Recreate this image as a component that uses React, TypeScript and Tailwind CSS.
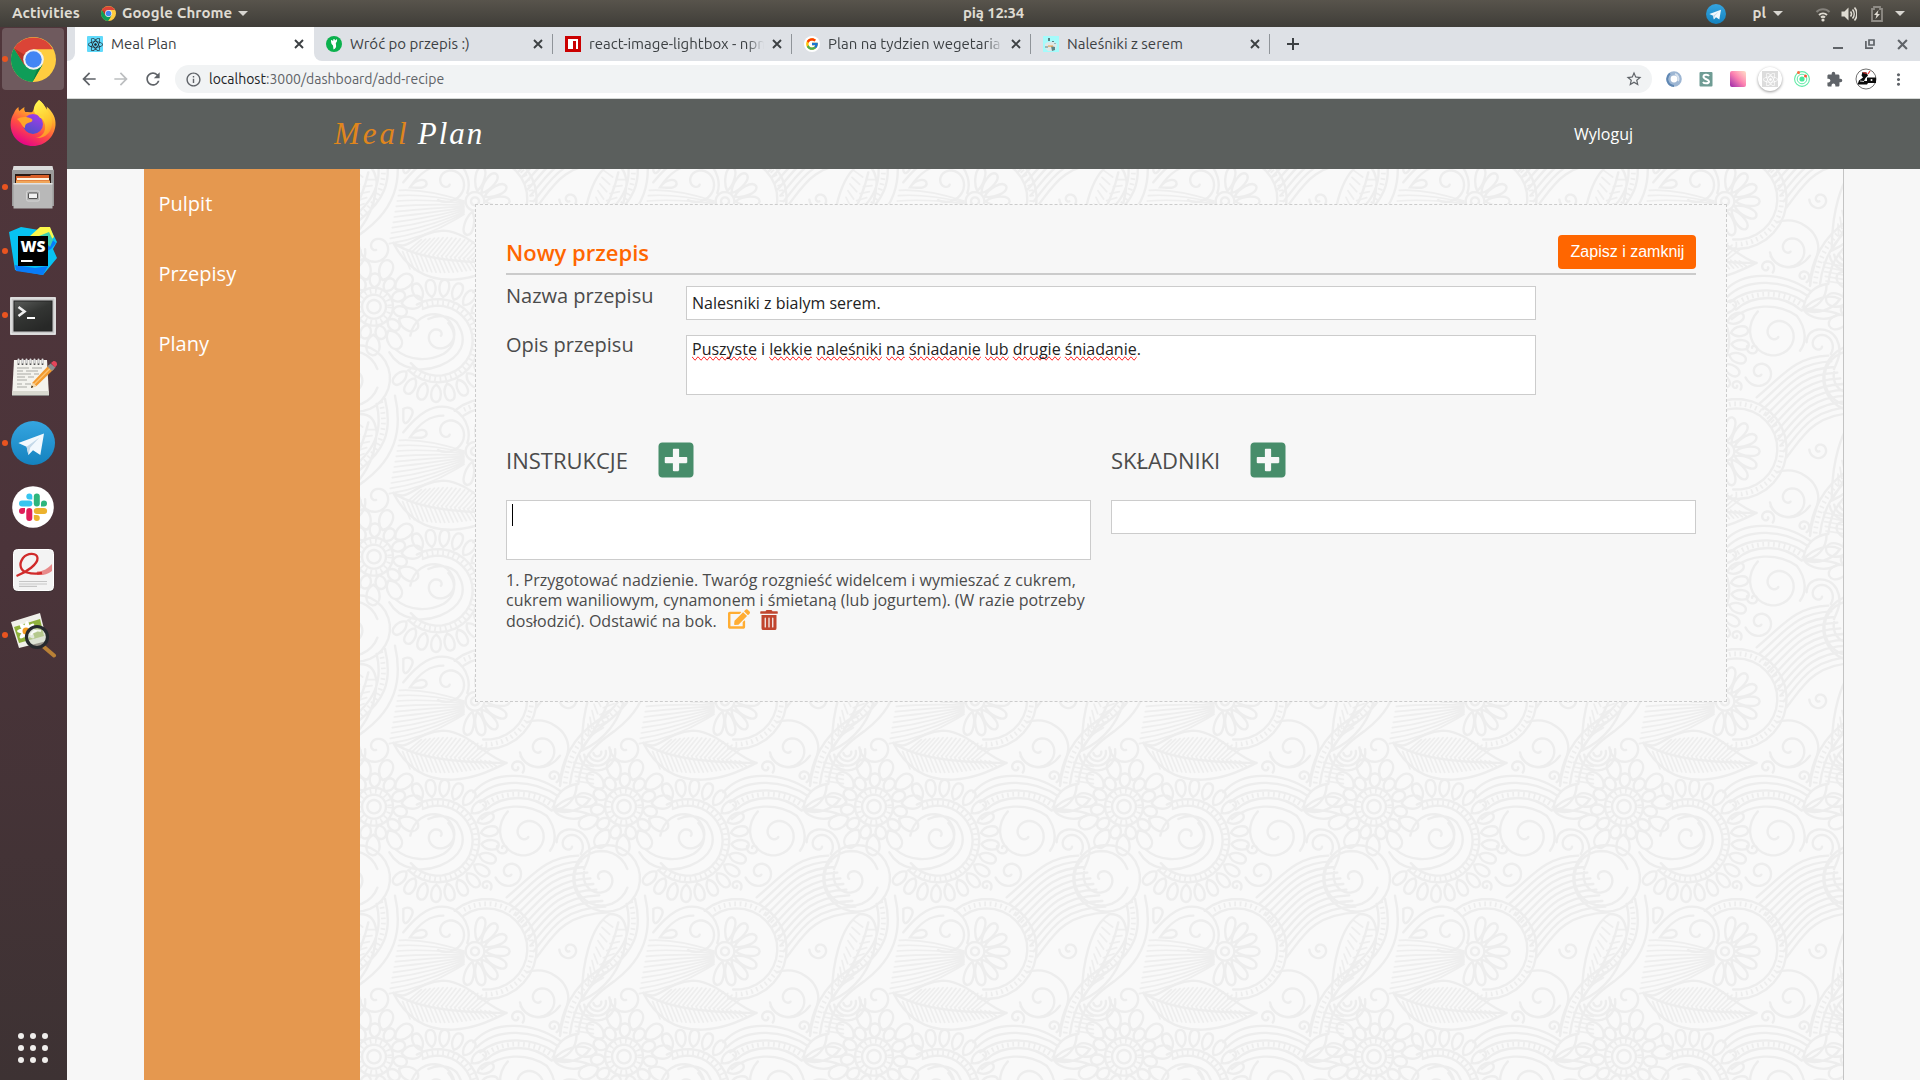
import React from "react";
import { FaPlusSquare, FaEdit, FaTrashAlt, FaReact } from "react-icons/fa";
import { FcGoogle } from "react-icons/fc";
import { MdArrowBack, MdArrowForward, MdRefresh, MdInfoOutline, MdStarBorder, MdExtension, MdMoreVert } from "react-icons/md";

/* ---------- geometry helpers for the ornamental wallpaper ---------- */

const rad = (d: number) => (d * Math.PI) / 180;
const pt = (cx: number, cy: number, r: number, a: number) =>
  `${(cx + r * Math.cos(rad(a))).toFixed(1)} ${(cy + r * Math.sin(rad(a))).toFixed(1)}`;

function spiral(cx: number, cy: number, r0: number, r1: number, from: number, to: number) {
  const n = Math.ceil(Math.abs(to - from) / 12);
  let d = "";
  for (let i = 0; i <= n; i++) {
    const t = i / n;
    d += (i ? "L" : "M") + pt(cx, cy, r0 + (r1 - r0) * t, from + (to - from) * t);
  }
  return d;
}

function arc(cx: number, cy: number, r: number, from: number, to: number) {
  return spiral(cx, cy, r, r, from, to);
}

function petals(cx: number, cy: number, r0: number, r1: number, w: number, from: number, to: number, n: number) {
  let d = "";
  for (let i = 0; i < n; i++) {
    const a = from + ((to - from) * i) / n;
    d += `M${pt(cx, cy, r0, a)}C${pt(cx, cy, r0 + (r1 - r0) * 0.3, a - w)} ${pt(cx, cy, r1, a - w * 0.7)} ${pt(cx, cy, r1, a)}`;
    d += `C${pt(cx, cy, r1, a + w * 0.7)} ${pt(cx, cy, r0 + (r1 - r0) * 0.3, a + w)} ${pt(cx, cy, r0, a)}`;
  }
  return d;
}

const lines: string[] = [
  // small blossom
  arc(42, 263, 20, 0, 360), arc(42, 263, 36, 0, 360), arc(42, 263, 57, 0, 360),
  petals(42, 263, 58, 100, 17, 10, 370, 11),
  petals(42, 263, 84, 146, 15, 26, 386, 11),
  // large shell
  spiral(235, 350, 8, 52, 0, -400), spiral(235, 350, 52, 84, -40, -180),
  arc(233, 365, 105, -115, 140), arc(233, 365, 125, -120, 135),
  "M88 400C120 455 190 460 240 440C300 415 330 370 290 310C270 290 235 285 205 300",
  "M105 390C150 430 210 425 250 405C290 380 290 340 265 312",
  petals(233, 365, 132, 184, 8, -112, 150, 18),
  // daisy and its ring
  arc(345, 697, 12, 0, 360), arc(345, 697, 28, 0, 360),
  petals(345, 697, 32, 104, 17, -78, 130, 8),
  arc(380, 690, 122, -125, 95), arc(380, 690, 150, -130, 100),
  // scrolls
  spiral(265, 640, 8, 62, 60, 480), "M130 640C170 590 220 545 280 570C330 600 330 650 322 672", "M150 655C180 610 210 590 250 590",
  spiral(540, 90, 8, 62, 80, 520), "M500 10C560 -10 625 30 625 90C620 130 605 150 600 200", "M480 100C490 150 560 165 600 110",
  spiral(500, 345, 10, 60, 60, 430), spiral(500, 345, 60, 88, 70, 230), "M365 300C420 255 500 250 560 290C590 330 590 370 570 395",
  spiral(725, 478, 8, 56, 170, 560), arc(725, 478, 82, 20, 340), arc(740, 478, 100, -90, 270),
  spiral(630, 378, 8, 42, 40, 400), "M590 370C590 320 660 320 680 360C700 400 680 430 672 450",
  spiral(450, 460, 8, 46, 60, 520), spiral(50, 85, 8, 52, 100, 540), spiral(470, 145, 4, 24, 0, 400),
  spiral(580, 172, 4, 20, 0, 420), spiral(430, 388, 4, 20, 200, 560), spiral(628, 692, 5, 30, 90, 540),
  spiral(378, 500, 3, 18, 0, 400),
  // layered crest
  "M340 220C400 150 520 160 600 215", "M350 235C410 175 520 180 595 232", "M360 250C420 200 520 205 585 250", "M378 272C430 225 520 225 575 275",
  // veined leaf
  "M100 72C150 100 160 40 250 35C330 40 370 110 440 132", "M100 72C140 150 200 185 280 182C350 178 400 150 440 132", "M100 72C180 125 320 130 440 132",
  // lower leaf
  "M665 845C665 740 690 620 750 585", "M665 845C740 810 795 740 800 640C795 600 780 585 750 585", "M668 838C720 760 760 680 775 610",
  // beaded stem
  "M825 540C850 640 820 700 740 760C670 810 640 870 630 945", "M855 530C880 640 850 720 765 785C700 830 660 870 655 945", "M800 555C820 640 790 700 720 750C640 800 600 880 600 950",
  // leaf trio
  "M580 272C585 220 620 200 650 195C650 240 620 270 580 272Z", "M580 272C610 235 660 225 690 240C670 270 620 290 580 272Z", "M580 272C610 270 660 275 685 285C650 310 600 300 580 272Z",
  // buds
  "M130 570C145 560 165 570 155 590C145 610 135 620 130 605Z", "M150 655C165 630 200 625 200 645C195 662 170 655 150 655Z",
];

const fine: string[] = [];

[0, 1, 2, 3].forEach((i) => lines.push(arc(712, 100, 12 + i * 14, -10, 170)));
for (let i = 0; i < 11; i++) {
  lines.push(`M${440 + i * 9} ${535 + i * 18}C${520 + i * 6} ${470 + i * 18} ${550 + i * 6} ${415 + i * 17} ${655 + i * 9} ${410 + i * 17}`);
}
for (let i = 0; i < 11; i++) {
  fine.push(`M${118 - i * 3} ${664 + i * 16}C180 ${660 + i * 15} 250 ${676 + i * 10} 312 ${696 + i * 4}`);
}
for (let i = 0; i < 21; i++) {
  const x = 128 + i * 13;
  fine.push(`M${x} ${98 + i * 1.4}L${x + 22} ${150 + 10 * Math.sin(i / 5)}`);
  if (i < 17) fine.push(`M${x + 14} ${98 + i * 1.6}L${x + 56} ${62 - 24 * Math.sin(i / 6) + i * 2.4}`);
}
for (let i = 0; i < 9; i++) {
  fine.push(`M${686 + i * 9} ${800 - i * 22}L${684 + i * 6} ${765 - i * 20}`, `M${690 + i * 10} ${800 - i * 21}L${730 + i * 8} ${776 - i * 18}`);
  if (i < 5) fine.push(`M${640 + i * 2} ${130 + i * 14}L700 ${142 + i * 13}`);
}

const beads: string[] = [
  arc(42, 263, 47, 0, 360), arc(233, 365, 115, -115, 138), arc(380, 690, 136, -120, 95),
  "M370 262C425 212 520 214 580 262", "M812 548C836 640 808 700 730 755C655 805 620 875 615 948",
];

const shifts: [number, number][] = [[0, 0], [-750, 0], [750, 0], [0, -750], [0, 750], [-750, -750]];

function Wallpaper() {
  return (
    <svg className="absolute inset-0 h-full w-full" aria-hidden="true">
      <defs>
        <g id="motif" fill="none" strokeLinecap="round">
          <path d={fine.join("")} stroke="#eeeeee" strokeWidth="5" />
          <path d={lines.join("")} stroke="#ededed" strokeWidth="7" />
          <path d={beads.join("")} stroke="#ededed" strokeWidth="14" strokeDasharray="5 11" strokeLinecap="butt" />
        </g>
        <pattern id="paisley" width="250" height="250" y="50" patternUnits="userSpaceOnUse">
          <rect width="250" height="250" fill="#f9f9f9" />
          <g transform="scale(.33333)">
            {shifts.map(([x, y]) => <use key={`${x},${y}`} href="#motif" x={x} y={y} />)}
          </g>
        </pattern>
      </defs>
      <rect width="100%" height="100%" fill="url(#paisley)" />
    </svg>
  );
}

/* ---------- icons ---------- */

function Chrome({ className }: { className: string }) {
  return (
    <svg viewBox="0 0 48 48" className={className}>
      <circle cx="24" cy="24" r="24" fill="#ffcd40" />
      <path d="M3.2 12A24 24 0 0 0 23 48L33.5 29.5 24 24 14.5 29.5Z" fill="#0f9d58" />
      <path d="M3.2 12A24 24 0 0 1 44.8 13H24L14.5 29.5Z" fill="#db4437" />
      <path d="M3.2 12 14.5 30 16 20Z" fill="#b53427" />
      <path d="M23 48 33.5 29.5 28 34Z" fill="#0b8043" />
      <circle cx="24" cy="24" r="11" fill="#f1f1f1" />
      <circle cx="24" cy="24" r="8.8" fill="#4285f4" />
    </svg>
  );
}

function Firefox() {
  return (
    <svg viewBox="0 0 48 48" className="size-12">
      <defs>
        <linearGradient id="ffBody" x1=".8" y1="0" x2=".3" y2="1">
          <stop offset="0" stopColor="#fff44f" /><stop offset=".35" stopColor="#ffa52a" /><stop offset=".65" stopColor="#ff4a45" /><stop offset="1" stopColor="#e3008c" />
        </linearGradient>
        <linearGradient id="ffGlobe" x1=".7" y1="0" x2=".3" y2="1">
          <stop offset="0" stopColor="#a33be8" /><stop offset="1" stopColor="#4b50c8" />
        </linearGradient>
        <linearGradient id="ffFlame" x1=".4" y1="0" x2=".7" y2="1">
          <stop offset="0" stopColor="#fff44f" /><stop offset=".6" stopColor="#ffc52d" /><stop offset="1" stopColor="#ff8a2a" />
        </linearGradient>
      </defs>
      <path d="M5 14C6 11 8 9 9.500 8c0 2 0 3 1 4 1-1 3-3 5-4-.5 2-.2 3.500.8 5 2 0 5 .5 7 0L30 1c4 3 6 6 7 10 1-1 1-2 .6-3.500C44 13 47 19 46.500 26 45.500 38 36 47 24 47 11 47 2 38 1.600 26 1.500 21 3 17 5 14Z" fill="url(#ffBody)" />
      <path d="M30 1c4 3 6 6 8 10 3 3 6 8 5 15-1 8-8 14-16 13 6-1 10-6 9-13-1-5-4-8-8-10-5-3-4-10 2-15Z" fill="url(#ffFlame)" />
      <circle cx="24" cy="25" r="10" fill="url(#ffGlobe)" />
      <path d="M8 20c4-2 9-3 15 0 1 2 0 3-4 4-3 1-3 3-3 5-3-1-3-5-8-9Z" fill="#ffa52a" />
      <path d="M28 14c5 1 7 4 7 6-2-1-3-1-4-1-1-2-3-3-3-5Z" fill="#ffd63a" />
    </svg>
  );
}

function Files() {
  return (
    <svg viewBox="0 0 48 48" className="size-12">
      <path d="M4.500 3h39L45 10H3Z" fill="#dcdcdc" />
      <path d="M3 7h42v36H3Z" fill="#9b9b9b" />
      <path d="M6 11h36v10H6Z" fill="#2b1a14" />
      <path d="M7 13h14l1-1h18v8H7Z" fill="#d95f27" />
      <path d="M8 15h32v2H8Z" fill="#fff4e0" />
      <path d="M7 17.500h34V21H7Z" fill="#f0a659" />
      <path d="M4.500 20h39v25.500h-39Z" fill="#b8b8b8" />
      <path d="M4.500 20h39v1.500h-39Z" fill="#e2e2e2" />
      <rect x="17.500" y="28" width="13" height="10" rx="1.500" fill="#b3b3b3" stroke="#d6d6d6" />
      <rect x="19.500" y="30" width="9" height="5.500" rx=".5" fill="#f2f2f2" stroke="#555" />
    </svg>
  );
}

function WebStorm() {
  return (
    <svg viewBox="0 0 48 48" className="size-12">
      <path d="M0 5 12 0l18 3 11-2 7 14-4 7 4 9-14 17L6 43Z" fill="#07c3f2" />
      <path d="M38 8 47 16l-5 6-4 2ZM6 38l20 3 13-2-5 9L7 44Z" fill="#087cfa" />
      <path d="M21 9 31 0h10l4 10-4 4Z" fill="#fcf84a" />
      <path d="m30 9 10-4 4 8-3 7Z" fill="#3fd0b0" />
      <rect x="9" y="9" width="30" height="30" fill="#000" />
      <rect x="12" y="33" width="11.500" height="2" fill="#fff" />
      <text x="11.500" y="25" fontFamily="Open Sans, sans-serif" fontWeight="800" fontSize="15.500" textLength="25" lengthAdjust="spacingAndGlyphs" fill="#fff">WS</text>
    </svg>
  );
}

function Terminal() {
  return (
    <svg viewBox="0 0 48 48" className="size-12 translate-y-px">
      <defs>
        <linearGradient id="term" x1="0" y1="0" x2=".6" y2="1"><stop offset="0" stopColor="#5a5c5a" /><stop offset=".5" stopColor="#333533" /><stop offset="1" stopColor="#272827" /></linearGradient>
      </defs>
      <rect x="1" y="5" width="46" height="38" rx="1" fill="#c9c9c9" />
      <rect x="2" y="6" width="44" height="36" fill="none" stroke="#eee" />
      <rect x="5" y="9" width="38" height="30" fill="url(#term)" stroke="#222" />
      <path d="m9.500 15 6 4.500-6 4.500" fill="none" stroke="#eee" strokeWidth="2.600" />
      <path d="M18 26h8" stroke="#fff" strokeWidth="2" />
    </svg>
  );
}

function Notes() {
  return (
    <svg viewBox="0 0 48 48" className="size-12 -translate-y-0.5">
      <path d="M5 7h33l2 36H3Z" fill="#f4f3ee" />
      <path d="M3.300 38h36.500l.2 4H3Z" fill="#d8d8cf" />
      <path d="M2.500 42.500h38" stroke="#222" strokeWidth="1.200" opacity=".5" />
      <path d="M8 15h12m3 0h10M8 18h6m3 0h12M8 21h14m3 0h5M8 24h8m3 0h6M8 27h10M8 31h5m3 0h6M8 34h10" stroke="#a9a9a4" strokeWidth="1" />
      <path d="M9.500 7v5m4-5v5m4-5v5m4-5v5m4-5v5m4-5v5m4-5v5" stroke="#555" strokeWidth="1.700" />
      <path d="M9.500 6.500v3m4-3v3m4-3v3m4-3v3m4-3v3m4-3v3m4-3v3" stroke="#ddd" strokeWidth="2" strokeLinecap="round" />
      <path d="m22 35 1.500-5.500L40 12l5 4-17.500 17Z" fill="#f39a2f" />
      <path d="m25 31.500 17-17" stroke="#fbc372" strokeWidth="1.500" />
      <path d="m22 35 1.500-5.500 4 3.500Z" fill="#f3dcb4" />
      <path d="m22 35 .8-2.500 1.500 1.500Z" fill="#111" />
      <path d="m38.500 13.500 3-3 5 4-3.500 3.500Z" fill="#8b8f90" />
      <path d="m42 10 2.500-2c2-.5 4 1.500 3.500 4l-2 2.500Z" fill="#e4455a" />
    </svg>
  );
}

function Telegram({ className }: { className: string }) {
  return (
    <svg viewBox="0 0 48 48" className={className}>
      <defs><linearGradient id="tg" x1="0" y1="0" x2="0" y2="1"><stop offset="0" stopColor="#35a5e0" /><stop offset="1" stopColor="#1482bf" /></linearGradient></defs>
      <circle cx="24" cy="24" r="24" fill="url(#tg)" />
      <path d="M8 24 36 13.500 32 37l-8-5-5 5-2-9Z" fill="#f2f8fd" />
      <path d="m17 28 14-10-10 11-2 8Z" fill="#c3d8e8" />
    </svg>
  );
}

function Slack() {
  return (
    <svg viewBox="0 0 48 48" className="size-12">
      <circle cx="24" cy="24" r="20.800" fill="#fff" />
      <g fill="#36c5f0"><rect x="10" y="17.500" width="13.300" height="6" rx="3" /><path d="M23.300 16.500h-3a3 3 0 1 1 3-3Z" /></g>
      <g fill="#2eb67d"><rect x="24.800" y="10.500" width="6" height="13" rx="3" /><path d="M32 23.500v-3a3 3 0 1 1 3 3Z" /></g>
      <g fill="#ecb22e"><rect x="24.800" y="25" width="13.300" height="6" rx="3" /><path d="M24.800 32h3a3 3 0 1 1-3 3Z" /></g>
      <g fill="#e01e5a"><rect x="17.300" y="25" width="6" height="13" rx="3" /><path d="M16 25v3a3 3 0 1 1-3-3Z" /></g>
    </svg>
  );
}

function PdfReader() {
  return (
    <svg viewBox="0 0 48 48" className="size-12">
      <rect x="4.500" y="3.500" width="40" height="41.500" rx="4" fill="#333" opacity=".4" />
      <rect x="4.500" y="2.500" width="40" height="41" rx="4" fill="#f3f3f3" stroke="#fff" />
      <path d="M10 34.500h28M10 37h28M10 39.300h18" stroke="#c5c5c5" strokeWidth="1.200" />
      <path d="M28 24.500c6 0 11-3 15-7.500v7c-5 3.500-9 4.500-15 4Z" fill="#e88a8a" />
      <path d="M7.500 29C18 25 29 17 28.500 11 28 6 19 5 14 11c-5 7-2 13 4 14.500 5 1.500 10 1.500 15 .5" fill="none" stroke="#d02a2a" strokeWidth="2.300" />
    </svg>
  );
}

function ImageViewer() {
  return (
    <svg viewBox="0 0 48 48" className="size-12 -translate-y-px">
      <path d="M2 12 31 3l7 28-28 7Z" fill="#f0f0ea" />
      <path d="m5 17 26-8 4 17-25 7Z" fill="#8fb23c" />
      <g fill="#fff">{[0, 45, 90, 135].map((a) => <ellipse key={a} cx="18" cy="21" rx="10" ry="3" transform={`rotate(${a} 18 21)`} />)}</g>
      <circle cx="17" cy="21" r="3.500" fill="#f29a1f" />
      <path d="m35 37 10 8.500" stroke="#b98136" strokeWidth="4" strokeLinecap="round" />
      <circle cx="28" cy="27" r="10.500" fill="#cfd8c4" fillOpacity=".6" stroke="#262a2e" strokeWidth="3.200" />
      <path d="M22 25c2-4 6-5 10-4" stroke="#fff" strokeWidth="2" fill="none" opacity=".8" />
    </svg>
  );
}

const X = ({ className }: { className: string }) => (
  <svg viewBox="0 0 10 10" className={className}><path d="m1 1 8 8M9 1 1 9" stroke="currentColor" strokeWidth="1.900" /></svg>
);

const Caret = () => <svg viewBox="0 0 10 5" className="h-[5px] w-2.5"><path d="M0 0h10L5 5Z" fill="#d8d6d1" /></svg>;

/* ---------- shell ---------- */

function TopBar() {
  return (
    <header className="grid h-[27px] shrink-0 grid-cols-3 items-center bg-linear-to-b from-[#58544c] to-[#3f3d38] text-[15px] font-bold text-[#dfdbd2]">
      <div className="flex items-center pl-3">
        <span className="w-[89px] tracking-[.12px]">Activities</span>
        <Chrome className="mr-1.5 size-[15px]" />
        <span className="mr-1.5 tracking-[.1px]">Google Chrome</span>
        <Caret />
      </div>
      <div className="pl-[67px] text-center tracking-[-.15px]">pią 12:34</div>
      <div className="flex items-center justify-end pr-[15px]">
        <Telegram className="mr-[26px] size-5" />
        <span className="mr-[7px]">pl</span>
        <Caret />
        <svg viewBox="0 0 16 16" className="ml-8 size-4" fill="none" strokeWidth="2">
          <path d="M1.500 6a9 9 0 0 1 13 0" stroke="#85827c" /><path d="M4 9a6 6 0 0 1 8 0" stroke="#dfdbd2" /><path d="M6 11.500a3 3 0 0 1 4 0" stroke="#dfdbd2" /><circle cx="8" cy="14" r="1.600" fill="#dfdbd2" />
        </svg>
        <svg viewBox="0 0 16 16" className="ml-2.5 size-4" fill="none" stroke="#dfdbd2" strokeWidth="1.600">
          <path d="M.5 5.500h3l4-4v13l-4-4h-3Z" fill="#dfdbd2" stroke="none" /><path d="M9.500 5.500a4 4 0 0 1 0 5M11.500 3.500a7 7 0 0 1 0 9M13.500 1.500a10 10 0 0 1 0 13" />
        </svg>
        <svg viewBox="0 0 12 16" className="ml-3.5 h-4 w-3">
          <path d="M1 3h2V1h6v2h2v12H1Z" fill="none" stroke="#8f8c86" strokeWidth="1.800" /><path d="M7.500 4 3 9h2.500L4.500 13 9 8H6.500Z" fill="#dfdbd2" />
        </svg>
        <span className="ml-3"><Caret /></span>
      </div>
    </header>
  );
}

const apps: { node: React.ReactNode; running: boolean; active?: boolean }[] = [
  { node: <Chrome className="size-[45px]" />, running: true, active: true },
  { node: <Firefox />, running: false },
  { node: <Files />, running: true },
  { node: <WebStorm />, running: true },
  { node: <Terminal />, running: true },
  { node: <Notes />, running: false },
  { node: <Telegram className="size-11" />, running: true },
  { node: <Slack />, running: false },
  { node: <PdfReader />, running: false },
  { node: <ImageViewer />, running: true },
];

function Dock() {
  return (
    <nav className="flex w-[67px] shrink-0 flex-col justify-between bg-linear-to-b from-[#50363b] via-[#4b343a] to-[#3d3233]">
      <ul>
        {apps.map((a, i) => (
          <li key={i} className="flex h-16 items-center">
            <span className={a.running ? "z-10 -mr-2 ml-0.5 size-1.5 rounded-full bg-[#e95420]" : "-mr-2 ml-0.5 size-1.5"} />
            <span className={a.active ? "ml-0.5 flex size-[62px] items-center justify-center rounded bg-[#6f5a5e]" : "ml-0.5 flex size-[62px] items-center justify-center"}>
              {a.node}
            </span>
          </li>
        ))}
      </ul>
      <div className="mb-[17px] ml-[18px] grid w-[30px] grid-cols-3 gap-1.5">
        {Array.from({ length: 9 }, (_, i) => <span key={i} className="size-1.5 rounded-full bg-[#f0eeec]" />)}
      </div>
    </nav>
  );
}

const tabs: { title: string; icon: React.ReactNode }[] = [
  { title: "Meal Plan", icon: <span className="flex size-4 items-center justify-center rounded-[1px] bg-[#61dafb]"><FaReact className="size-[15px] text-[#20232a]" /></span> },
  {
    title: "Wróć po przepis :)",
    icon: <svg viewBox="0 0 16 16" className="size-4"><circle cx="8" cy="8" r="8" fill="#0bb14d" /><path d="M5 4.500c.5-.8 1.200-.5 2 .8L7.500 3h1l.5 1.500L11 3c.3 2-.2 3-1.200 4L10 9c.5 2-.5 4-2.500 4.500L7 9.500C5.500 8.500 5 6.500 5 4.500Z" fill="#fff" /></svg>,
  },
  { title: "react-image-lightbox - npm", icon: <svg viewBox="0 0 16 16" className="size-4"><path d="M0 0h16v16H0Z" fill="#cb0000" /><path d="M3 3h10v10h-2V5H8v8H3Z" fill="#fff" /></svg> },
  { title: "Plan na tydzien wegetaria", icon: <span className="flex size-4 items-center justify-center rounded-full bg-white"><FcGoogle className="size-3.5" /></span> },
  {
    title: "Naleśniki z serem",
    icon: <svg viewBox="0 0 16 16" className="size-4"><path d="M0 0h16v16H0Z" fill="#a5fbfb" /><path d="M2 8c2-3 10-3 12 0l-1 5-4 2H5L2 12Z" fill="#dfe8e8" /><path d="M5 2h2v3H5ZM9 5h2v1H9ZM8 10l4 1v3l-3 1Z" fill="#5d8486" /><path d="M5 9.500h5v1.200H5Z" fill="#e8a54c" /><path d="M2 10h3v2H2ZM11 7h2v1h-2Z" fill="#9db7b8" /></svg>,
  },
];

function TabStrip() {
  return (
    <div className="flex h-[34px] bg-[#dee1e6]">
      <div className="flex w-2 bg-white"><span className="flex-1 rounded-br-lg bg-[#dee1e6]" /></div>
      <div className="flex bg-[linear-gradient(90deg,#fff_260px,#dee1e6_260px)]">
        {tabs.map((t, i) => (
          <div key={t.title} className={i === 0 ? "-mr-px flex w-60 items-center rounded-t-lg bg-white pl-3" : i === 1 ? "flex w-[239px] items-center rounded-bl-lg bg-[#dee1e6] pl-3" : "flex w-[239px] items-center pl-3"}>
            {t.icon}
            <span className={i === 2 || i === 3 ? "ml-2 w-[175px] overflow-hidden mask-r-from-90% text-[15px] whitespace-nowrap text-[#3c4043]" : "ml-2 w-[175px] text-[15px] whitespace-nowrap text-[#3c4043]"}>{t.title}</span>
            <X className="ml-2 size-2.5 text-[#3c4043]" />
            {i > 0 && <span className="ml-[9px] h-5 w-px bg-[#8f9499]" />}
          </div>
        ))}
      </div>
      <svg viewBox="0 0 12 12" className="mt-[11px] ml-[17px] size-3"><path d="M6 0v12M0 6h12" stroke="#3c4043" strokeWidth="2" /></svg>
      <div className="mr-[12px] ml-auto flex items-center text-[#5f6368]">
        <span className="mt-2 h-0.5 w-2.5 bg-[#5f6368]" />
        <svg viewBox="0 0 10 10" className="ml-[22px] size-2.5" fill="none" stroke="currentColor" strokeWidth="1.700"><path d="M4 1h5v5H4Z" /><path d="M.9 2v7.100H8" /></svg>
        <X className="ml-[22px] size-[11px]" />
      </div>
    </div>
  );
}

function Toolbar() {
  return (
    <div className="flex h-[38px] items-center border-b border-[#d5d8d6] bg-white pr-1.5 pb-px text-[#5f6368]">
      <div className="ml-3 flex gap-3">
        <MdArrowBack className="size-5" />
        <MdArrowForward className="size-5 text-[#bcbec0]" />
        <MdRefresh className="size-5" />
      </div>
      <div className="ml-3 flex h-7 flex-1 items-center rounded-full bg-[#f1f3f4] pr-[9px] pl-2.5">
        <MdInfoOutline className="size-[17px]" />
        <span className="ml-[7px] flex-1 text-sm"><span className="text-[#202124]">localhost</span>:3000/dashboard/add-recipe</span>
        <MdStarBorder className="size-[18px]" />
      </div>
      <div className="ml-3 flex *:flex *:size-8 *:items-center *:justify-center">
        <span className="-ml-1.5">
          <svg viewBox="0 0 16 16" className="size-4" fill="none"><circle cx="8" cy="8" r="5.600" stroke="#9db6d3" strokeWidth="4.400" /><path d="M4 2.500A7 7 0 0 0 8 15" stroke="#5f87b3" strokeWidth="2" /><path d="M9 3a5 5 0 0 1 3 7" stroke="#d7e2ee" strokeWidth="2" /></svg>
        </span>
        <span><svg viewBox="0 0 16 16" className="size-4"><rect x="1.500" y="1" width="13" height="14.500" rx="1" fill="#6f9c94" /><path d="M11 5c-1-1.500-5.500-1.800-5.500.8S11 8 11 10.500s-5 2.300-6 .5" fill="none" stroke="#fff" strokeWidth="2" /></svg></span>
        <span><span className="size-4 rounded-xs bg-linear-to-tr from-[#9c1fa8] via-[#fb7fb0] to-[#ffe0c8]" /></span>
        <span><span className="flex size-6 shrink-0 items-center justify-center rounded-full bg-white shadow-[0_1px_3px_rgba(0,0,0,.4)]"><span className="flex size-4 items-center justify-center bg-[#dcdcdc]"><FaReact className="size-[15px] text-white" /></span></span></span>
        <span>
          <svg viewBox="0 0 16 16" className="size-4" fill="none"><circle cx="8" cy="8" r="7.400" stroke="#5eeaa5" strokeWidth="1.100" /><circle cx="8" cy="8" r="4.800" stroke="#5eeaa5" /><circle cx="8" cy="8" r="2.600" fill="#4be79a" /><circle cx="4.500" cy="1.600" r="1.500" fill="#ff6b3d" /><circle cx="11.500" cy="5" r="1.500" fill="#ff5436" /></svg>
        </span>
        <span><MdExtension className="size-[17px]" /></span>
        <span>
          <svg viewBox="0 0 22 22" className="size-[22px]"><circle cx="11" cy="11" r="10" fill="#fff" stroke="#333" strokeWidth=".7" /><path d="M7.500 4l4 .5 1.500 3-2.500 2.500L9 13h3V9.500h9V15h-8l-1 1.500H2.500l1.500-4 4-3-1.500-2Z" fill="#0c0c0c" /><path d="M8 4.500l4 1M13 6l2-3" stroke="#e03434" strokeWidth="1.200" /><circle cx="16.500" cy="12" r="1" fill="#fff" /><path d="M5 13l4 .5" stroke="#fff" strokeWidth=".8" /></svg>
        </span>
        <span><MdMoreVert className="size-[19px]" /></span>
      </div>
    </div>
  );
}

/* ---------- application ---------- */

const Misspelt = ({ children }: { children: string }) => (
  <span className="[text-decoration-line:spelling-error]">{children}</span>
);

const words = "Puszyste i lekkie naleśniki na śniadanie lub drugie śniadanie".split(" ");

function RecipeForm() {
  return (
    <section className="relative mt-[35px] ml-[115px] h-[498px] w-[1252px] border border-dashed border-[#ccc] bg-[#f7f7f7] px-[30px] pt-[30px] text-[#4b4b4b]">
      <div className="flex h-10 items-start justify-between border-b-2 border-[#cbcbcb]">
        <h1 className="mt-0.5 text-[22px] leading-[30px] font-semibold text-[#ff6600]">Nowy przepis</h1>
        <button className="h-[34px] w-[138px] rounded bg-[#ff6600] pl-px font-['Liberation_Sans',Arial,sans-serif] text-base text-white">Zapisz i zamknij</button>
      </div>
      <div className="mt-[11px] flex">
        <label className="w-[180px] text-xl leading-5">Nazwa przepisu</label>
        <div className="h-[34px] w-[850px] border border-[#ccc] bg-white px-[5px] text-base leading-8 text-[#222]">Nalesniki z bialym serem.</div>
      </div>
      <div className="mt-[15px] flex">
        <label className="w-[180px] text-xl leading-5">Opis przepisu</label>
        <div className="h-[60px] w-[850px] border border-[#ccc] bg-white px-[5px] pt-0.5 text-base leading-[22px] text-[#222]">
          {words.map((w, i) => <React.Fragment key={i}>{i > 0 && " "}{w === "i" ? w : <Misspelt>{w}</Misspelt>}</React.Fragment>)}.
        </div>
      </div>
      <div className="mt-[45px] grid grid-cols-2 gap-5">
        <div>
          <h2 className="flex h-10 items-center text-[22px]"><span className="w-[150px]">INSTRUKCJE</span><FaPlusSquare className="size-10 text-[#478d6a]" /></h2>
          <div className="mt-5 h-[60px] border border-[#ccc] bg-white px-[5px] pt-[3px]"><div className="h-[22px] w-px bg-black" /></div>
          <p className="mt-2.5 text-base leading-[20.400px] tracking-[.01px]">
            1. Przygotować nadzienie. Twaróg rozgnieść widelcem i wymieszać z cukrem, cukrem waniliowym, cynamonem i śmietaną (lub jogurtem). (W razie potrzeby dosłodzić). Odstawić na bok.
            <FaEdit className="-mt-2 mb-[-3px] ml-[11px] inline size-[22px] align-baseline text-[#ffad33]" />
            <FaTrashAlt className="-mt-2 mb-[-3px] ml-[9px] inline size-5 align-baseline text-[#c0452f]" />
          </p>
        </div>
        <div>
          <h2 className="flex h-10 items-center text-[22px]"><span className="w-[137px]">SKŁADNIKI</span><FaPlusSquare className="size-10 text-[#478d6a]" /></h2>
          <div className="mt-5 h-[34px] border border-[#ccc] bg-white" />
        </div>
      </div>
    </section>
  );
}

function MealPlan() {
  return (
    <div className="flex min-h-0 flex-1 flex-col bg-[#f7f7f7] font-['Open_Sans','Noto_Sans',sans-serif]">
      <header className="flex h-[70px] shrink-0 items-center justify-between bg-[#5b5f5d] pr-[287px] pl-[267px] text-white">
        <div className="font-['Liberation_Serif',serif] text-[31px] italic">
          <span className="mr-2 tracking-[3px] text-[#e0861c]">Meal</span><span className="tracking-[2px]">Plan</span>
        </div>
        <a className="text-base">Wyloguj</a>
      </header>
      <div className="flex min-h-0 flex-1 pl-[77px]">
        <aside className="flex w-[216px] flex-col bg-[#e5984f] pl-[14.500px] text-xl leading-[70px] text-white">
          <a>Pulpit</a><a>Przepisy</a><a>Plany</a>
        </aside>
        <main className="relative w-[1484px] border-r border-[#c4c4c4]">
          <Wallpaper />
          <RecipeForm />
        </main>
      </div>
    </div>
  );
}

export default function App() {
  return (
    <div className="flex h-[1080px] w-[1920px] flex-col overflow-hidden font-['Ubuntu','Open_Sans',sans-serif]">
      <TopBar />
      <div className="flex min-h-0 flex-1">
        <Dock />
        <div className="flex min-w-0 flex-1 flex-col">
          <TabStrip />
          <Toolbar />
          <MealPlan />
        </div>
      </div>
    </div>
  );
}
